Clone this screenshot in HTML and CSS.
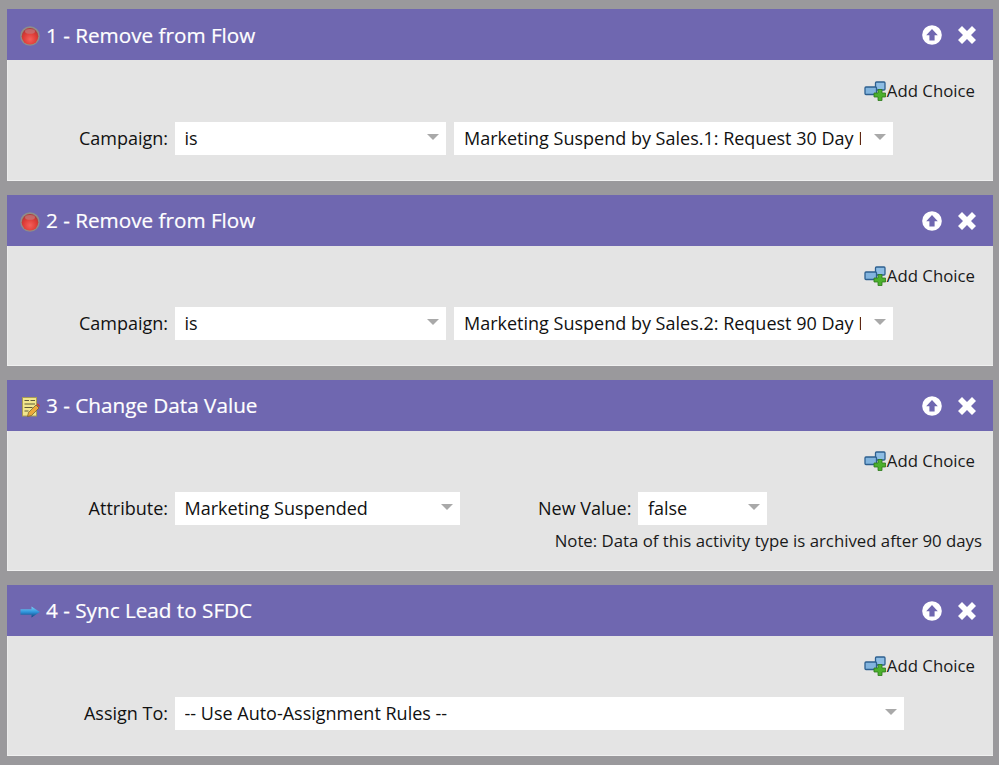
FILE: index.html
```html
<!DOCTYPE html>
<html lang="en">
<head>
<meta charset="utf-8">
<title>Flow</title>
<link rel="stylesheet" href="styles.css">
</head>
<body>
<svg class="defs" width="0" height="0" aria-hidden="true">
  <defs>
    <radialGradient id="redball" cx="50%" cy="68%" r="60%">
      <stop offset="0" stop-color="#f4605a"/>
      <stop offset="0.7" stop-color="#dd3a35"/>
      <stop offset="1" stop-color="#b23b3a"/>
    </radialGradient>
    <linearGradient id="bluearrow" x1="0" y1="0" x2="0" y2="1">
      <stop offset="0" stop-color="#7fd0f5"/>
      <stop offset="0.5" stop-color="#2f95dc"/>
      <stop offset="1" stop-color="#123f78"/>
    </linearGradient>
    <symbol id="i-stop" viewBox="0 0 20 20">
      <circle cx="10" cy="10" r="9.800" fill="#8f8c88"/>
      <circle cx="10" cy="10.300" r="8.300" fill="url(#redball)"/>
      <ellipse cx="10" cy="5.400" rx="5" ry="2.300" fill="#c4777a" opacity=".75"/>
    </symbol>
    <symbol id="i-up" viewBox="0 0 20 20">
      <circle cx="10" cy="10" r="9.800" fill="#fff"/>
      <path d="M10 4 15.800 10.200H12.600V15.600H7.400V10.200H4.200Z" fill="#6f67b0"/>
    </symbol>
    <symbol id="i-x" viewBox="0 0 20 20">
      <path d="M1 5 5 1l5 5 5-5 4 4-5 5 5 5-4 4-5-5-5 5-4-4 5-5Z" fill="#fff"/>
    </symbol>
    <symbol id="i-add" viewBox="0 0 22 20">
      <rect x="11.500" y="1" width="9.500" height="8" rx="1" fill="#8dbde4" stroke="#2d5f8f" stroke-width="1.300"/>
      <rect x="1" y="6" width="11.500" height="7.500" rx="1" fill="#82b4de" stroke="#2d5f8f" stroke-width="1.300"/>
      <path d="M10 12h4V8.500h4V12h3.500v4H18v3.500h-4V16h-4Z" fill="#4cb02e" stroke="#2c7a1a" stroke-width=".8"/>
    </symbol>
    <symbol id="i-edit" viewBox="0 0 18 20">
      <rect x=".5" y=".5" width="14" height="18.500" fill="#f1e68c" stroke="#a89c55"/>
      <path d="M2.500 3.500h4.500M8.500 3.500h4.500M2.500 7h10.500M2.500 10.500h8M2.500 14h4" stroke="#5f5a3a" stroke-width="1.200"/>
      <path d="M5.500 19.500 6.500 15.500 14 8l3 3-7.500 7.500Z" fill="#eea93a" stroke="#6d5a2a" stroke-width=".7"/>
      <path d="M14.500 7.500l1.200-1.200 2.300 2.400-1 1.300Z" fill="#c9403a"/>
    </symbol>
    <symbol id="i-arrow" viewBox="0 0 20 12">
      <path d="M.5 3.200H11.500V.5L19.800 6 11.500 11.500V8.800H.5Z" fill="url(#bluearrow)"/>
    </symbol>
  </defs>
</svg>

<main class="flow">
  <section class="card">
    <header class="card-head">
      <svg class="step-icon"><use href="#i-stop"/></svg>
      <h2 class="card-title">1 - Remove from Flow</h2>
      <svg class="tool tool-up"><use href="#i-up"/></svg>
      <svg class="tool tool-x"><use href="#i-x"/></svg>
    </header>
    <div class="card-body">
      <div class="add-row"><svg class="add-icon"><use href="#i-add"/></svg><span>Add Choice</span></div>
      <div class="field-row">
        <label class="label">Campaign:</label>
        <div class="select w-op"><span class="value">is</span><i class="caret"></i></div>
        <div class="select w-camp"><span class="value">Marketing Suspend by Sales.1: Request 30 Day Delay</span><i class="caret"></i></div>
      </div>
    </div>
  </section>

  <section class="card">
    <header class="card-head">
      <svg class="step-icon"><use href="#i-stop"/></svg>
      <h2 class="card-title">2 - Remove from Flow</h2>
      <svg class="tool tool-up"><use href="#i-up"/></svg>
      <svg class="tool tool-x"><use href="#i-x"/></svg>
    </header>
    <div class="card-body">
      <div class="add-row"><svg class="add-icon"><use href="#i-add"/></svg><span>Add Choice</span></div>
      <div class="field-row">
        <label class="label">Campaign:</label>
        <div class="select w-op"><span class="value">is</span><i class="caret"></i></div>
        <div class="select w-camp"><span class="value">Marketing Suspend by Sales.2: Request 90 Day Delay</span><i class="caret"></i></div>
      </div>
    </div>
  </section>

  <section class="card">
    <header class="card-head">
      <svg class="step-icon step-edit"><use href="#i-edit"/></svg>
      <h2 class="card-title">3 - Change Data Value</h2>
      <svg class="tool tool-up"><use href="#i-up"/></svg>
      <svg class="tool tool-x"><use href="#i-x"/></svg>
    </header>
    <div class="card-body body-tall">
      <div class="add-row"><svg class="add-icon"><use href="#i-add"/></svg><span>Add Choice</span></div>
      <div class="field-row">
        <label class="label">Attribute:</label>
        <div class="select w-attr"><span class="value">Marketing Suspended</span><i class="caret"></i></div>
        <label class="label-inline">New Value:</label>
        <div class="select w-val"><span class="value">false</span><i class="caret"></i></div>
      </div>
      <p class="note">Note: Data of this activity type is archived after 90 days</p>
    </div>
  </section>

  <section class="card">
    <header class="card-head">
      <svg class="step-icon step-arrow"><use href="#i-arrow"/></svg>
      <h2 class="card-title">4 - Sync Lead to SFDC</h2>
      <svg class="tool tool-up"><use href="#i-up"/></svg>
      <svg class="tool tool-x"><use href="#i-x"/></svg>
    </header>
    <div class="card-body">
      <div class="add-row"><svg class="add-icon"><use href="#i-add"/></svg><span>Add Choice</span></div>
      <div class="field-row">
        <label class="label">Assign To:</label>
        <div class="select w-full"><span class="value">-- Use Auto-Assignment Rules --</span><i class="caret"></i></div>
      </div>
    </div>
  </section>
</main>
</body>
</html>
```
FILE: styles.css
```css
html, body {
  margin: 0;
  padding: 0;
}
body {
  background: #9a999c;
  font-family: "Open Sans", "Noto Sans", sans-serif;
  color: #111;
  height: 765px;
  overflow: hidden;
}
.defs {
  position: absolute;
}
.flow {
  display: flex;
  flex-direction: column;
  gap: 14px;
  padding: 9px 6px 0 7px;
}
.card {
  display: flex;
  flex-direction: column;
}
.card-head {
  height: 51px;
  background: #6f67b0;
  display: flex;
  align-items: center;
  padding: 0 16px 0 13px;
}
.step-icon {
  width: 20px;
  height: 20px;
  flex: none;
  margin-top: 2px;
}
.step-edit {
  width: 18px;
  margin-left: 2px;
}
.step-arrow {
  height: 12px;
}
.card-title {
  margin: 0 auto 0 6px;
  font-size: 20.700px;
  line-height: 30px;
  font-weight: 400;
  color: #fff;
  position: relative;
  top: -1px;
  -webkit-text-stroke: 0.2px #fff;
}
.card:first-child .card-title {
  top: 0;
}
.tool {
  flex: none;
  width: 20px;
  height: 20px;
}
.tool-x {
  margin-left: 15px;
}
.card-body {
  background: #e4e4e4;
  height: 120px;
  box-sizing: border-box;
  border-bottom: 1px solid #f0f0f0;
  border-left: 1px solid #ececec;
  padding-top: 16px;
}
.card:first-child .card-body {
  height: 121px;
  padding-top: 17px;
}
.body-tall {
  height: 140px;
}
.add-row {
  display: flex;
  justify-content: flex-end;
  align-items: center;
  height: 28px;
  padding-right: 18px;
  font-size: 16.800px;
  line-height: 28px;
  color: #1a1a1a;
}
.add-icon {
  width: 22px;
  height: 20px;
  margin-right: 1px;
  flex: none;
}
.field-row {
  display: flex;
  align-items: center;
  margin-top: 17px;
}
.label {
  width: 160px;
  text-align: right;
  font-size: 18px;
  line-height: 33px;
  flex: none;
  margin-right: 7px;
}
.label-inline {
  font-size: 18px;
  line-height: 33px;
  margin-left: 78px;
  margin-right: 7px;
}
.select {
  position: relative;
  height: 33px;
  background: #fff;
  flex: none;
  display: flex;
  align-items: center;
  box-sizing: border-box;
  padding-left: 9.500px;
  font-size: 18px;
  line-height: 33px;
}
.value {
  display: block;
  white-space: nowrap;
  overflow: hidden;
}
.w-op { width: 271px; }
.w-camp {
  width: 439px;
  margin-left: 8px;
  padding-left: 10px;
}
.w-camp .value { width: 397px; }
.w-attr { width: 285px; }
.w-val { width: 129px; }
.w-full { width: 729px; }
.caret {
  position: absolute;
  right: 7px;
  top: 12px;
  width: 0;
  height: 0;
  border-left: 6px solid transparent;
  border-right: 6px solid transparent;
  border-top: 6px solid #a9a9a9;
}
.note {
  margin: 1px 0 0;
  font-size: 16.800px;
  line-height: 30px;
  text-align: right;
  padding-right: 11px;
  color: #1a1a1a;
}
```
